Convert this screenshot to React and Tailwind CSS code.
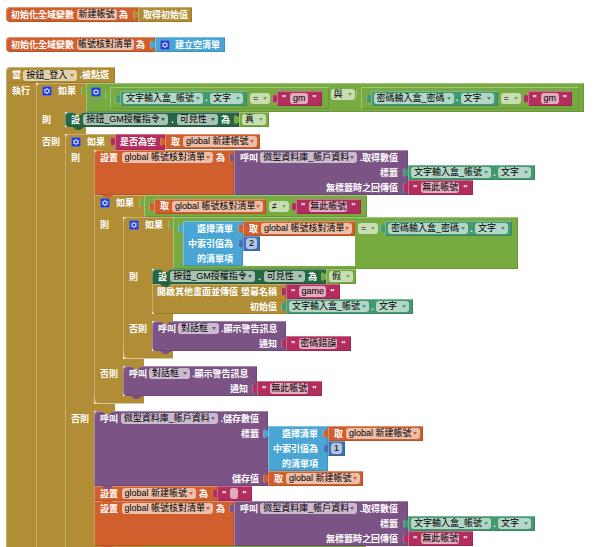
import React from "react";
import clsx from "clsx";

const MUSTARD = "bg-[#b18e35] text-[#b18e35]";
const GREEN = "bg-[#77ab41] text-[#77ab41]";
const CRIMSON = "bg-[#b32d5e] text-[#b32d5e]";
const ORANGE = "bg-[#d05f2d] text-[#d05f2d]";
const BLUE = "bg-[#49a6d4] text-[#49a6d4]";
const NAVY = "bg-[#3f71b5] text-[#3f71b5]";
const PURPLE = "bg-[#7c5385] text-[#7c5385]";
const TEAL = "bg-[#439970] text-[#439970]";
const FOREST = "bg-[#266643] text-[#266643]";

const BEVEL =
  "shadow-[inset_1px_1px_0_rgba(255,255,255,0.3),inset_-1px_-1px_0_rgba(0,0,0,0.12)]";

/* ---------- small parts ---------- */

function Label({ children }) {
  return <span className="shrink-0 whitespace-nowrap font-bold text-white">{children}</span>;
}

function Dropdown({ value, width }) {
  return (
    <span className={clsx("relative flex h-[11px] shrink-0", width)}>
      <select
        aria-label={value}
        className="h-[11px] w-full appearance-none rounded-[3px] bg-white/60 pl-[3px] text-[9px] leading-[11px] text-black outline-none"
      >
        <option>{value}</option>
      </select>
      <svg
        viewBox="0 0 4 3"
        className="pointer-events-none absolute right-[3px] top-[4px] h-[3px] w-[4px]"
        aria-hidden="true"
      >
        <path d="M0 0H4L2 3Z" fill="currentColor" />
      </svg>
    </span>
  );
}

function TextField({ value, width, name }) {
  return (
    <input
      type="text"
      aria-label={name}
      defaultValue={value}
      className={clsx(
        "h-[11px] shrink-0 rounded-[3px] bg-white/60 p-0 text-center text-[9px] leading-[11px] text-black outline-none",
        width
      )}
    />
  );
}

function Gear() {
  return (
    <button type="button" aria-label="設定" className="h-[10px] w-[10px] shrink-0">
      <svg viewBox="0 0 10 10" className="block h-full w-full">
        <rect x="0.4" y="0.4" width="9.2" height="9.2" rx="1.6" fill="#1f3fd8" stroke="#6a6fc8" strokeWidth="0.8" />
        <path
          d="M5 1.9V8.1M2.3 3.45L7.7 6.55M2.3 6.55L7.7 3.45"
          stroke="#fff"
          strokeOpacity="0.85"
          strokeWidth="1.1"
        />
        <circle cx="5" cy="5" r="1.9" fill="#1f3fd8" stroke="#e6e8fb" strokeWidth="0.9" />
      </svg>
    </button>
  );
}

function Plug() {
  return (
    <svg
      viewBox="0 0 5 10"
      className="absolute -left-[5px] top-[3px] z-10 h-[10px] w-[5px]"
      aria-hidden="true"
    >
      <path d="M5 1.6H3.6C2.8 1.6 2.6 0.6 1.8 0.6C0.8 0.6 0.4 1.6 0.4 3V6.2C0.4 7.8 0.8 8.6 1.8 8.6C2.8 8.6 3 7.8 3.8 7.8H5Z" fill="currentColor" />
      <path d="M1.8 0.6C0.8 0.6 0.4 1.6 0.4 3V6.2C0.4 7.8 0.8 8.6 1.8 8.6" fill="none" stroke="#fff" strokeOpacity="0.4" strokeWidth="0.7" />
    </svg>
  );
}

function Notch({ className }) {
  return (
    <svg
      viewBox="0 0 11 3"
      className={clsx("absolute left-[8px] z-10 h-[3px] w-[11px]", className)}
      aria-hidden="true"
    >
      <path d="M0 0H11L7.5 3H3.5Z" fill="currentColor" />
    </svg>
  );
}

function Row({ children, height = "h-[15px]", align = "justify-start" }) {
  return (
    <div className={clsx("flex items-start", height)}>
      <div className={clsx("flex h-[15px] grow items-center gap-[2px]", align)}>{children}</div>
    </div>
  );
}

/* ---------- value blocks ---------- */

function Value({ tone, className, children }) {
  return (
    <div className={clsx("relative flex h-[15px] shrink-0 items-center", tone, BEVEL, className)}>
      <Plug />
      {children}
    </div>
  );
}

function TextValue({ value, width }) {
  return (
    <Value tone={CRIMSON} className="gap-[4px] px-[5px]">
      <Label>"</Label>
      <TextField name="文字" value={value} width={width} />
      <Label>"</Label>
    </Value>
  );
}

function NumberValue({ value }) {
  return (
    <Value tone={NAVY} className="self-start px-[3px]">
      <TextField name="數字" value={value} width="w-[11px]" />
    </Value>
  );
}

function GetValue({ name, width }) {
  return (
    <Value tone={ORANGE} className="gap-[3px] self-start pl-[6px] pr-[3px]">
      <Label>取</Label>
      <Dropdown value={name} width={width} />
    </Value>
  );
}

function TextBoxValue({ name }) {
  return (
    <Value tone={TEAL} className="w-[127px] justify-between pl-[3px] pr-[4px]">
      <Dropdown value={name} width="w-[80px]" />
      <Label>.</Label>
      <Dropdown value="文字" width="w-[33px]" />
    </Value>
  );
}

function BoolValue({ value }) {
  return (
    <Value tone={GREEN} className="px-[3px]">
      <Dropdown value={value} width="w-[24px]" />
    </Value>
  );
}

function SelectItem({ list, index, className }) {
  return (
    <div className={clsx("flex items-start", className)}>
      <div className={clsx("relative w-[60px] shrink-0 pr-[10px]", BLUE, BEVEL)}>
        <Plug />
        <Row align="justify-end"><Label>選擇清單</Label></Row>
        <Row align="justify-end"><Label>中索引值為</Label></Row>
        <Row align="justify-end"><Label>的清單項</Label></Row>
      </div>
      <div className="flex flex-col items-start">
        {list}
        {index}
      </div>
    </div>
  );
}

function GmCheck({ box }) {
  return (
    <div className={clsx("relative flex h-[22px] items-center pl-[10px] pr-[7px]", GREEN, BEVEL)}>
      <Plug />
      <TextBoxValue name={box} />
      <div className="ml-[3px] mr-[7px]"><Dropdown value="=" width="w-[20px]" /></div>
      <TextValue value="gm" width="w-[18px]" />
    </div>
  );
}

function NotFoundCheck() {
  return (
    <div className={clsx("relative flex h-[22px] items-center pl-[10px] pr-[6px]", GREEN, BEVEL)}>
      <Plug />
      <div><GetValue name="global 帳號核對清單" width="w-[91px]" /></div>
      <div className="ml-[3px] mr-[7px]"><Dropdown value="≠" width="w-[20px]" /></div>
      <TextValue value="無此帳號" width="w-[38px]" />
    </div>
  );
}

function PasswordCheck() {
  return (
    <div className={clsx("relative flex h-[52px] items-start pl-[10px] pr-[6px] pt-[4px]", GREEN, BEVEL)}>
      <Plug />
      <SelectItem
        className="bg-white"
        list={<GetValue name="global 帳號核對清單" width="w-[91px]" />}
        index={<NumberValue value="2" />}
      />
      <div className="ml-[3px] mr-[7px] flex h-[15px] items-center">
        <Dropdown value="=" width="w-[20px]" />
      </div>
      <TextBoxValue name="密碼輸入盒_密碼" />
    </div>
  );
}

/* ---------- statement blocks ---------- */

function Statement({ tone, width, first, last, inputs, children }) {
  return (
    <div className="relative flex items-stretch">
      <div
        className={clsx(
          "relative shrink-0 pl-[6px] pr-[9px]",
          tone,
          BEVEL,
          width,
          first && "rounded-tl-[4px]",
          last && "rounded-bl-[4px]"
        )}
      >
        {first && <Notch className="top-0 text-[#b18e35]" />}
        {children}
        <Notch className="-bottom-[3px]" />
      </div>
      <div className="flex flex-col items-start">{inputs}</div>
    </div>
  );
}

function SetVisible({ value, ...rest }) {
  return (
    <Statement tone={FOREST} width="w-[174px]" inputs={<BoolValue value={value} />} {...rest}>
      <Row align="justify-between">
        <Label>設</Label>
        <Dropdown value="按鈕_GM授權指令" width="w-[85px]" />
        <Label>.</Label>
        <Dropdown value="可見性" width="w-[41px]" />
        <Label>為</Label>
      </Row>
    </Statement>
  );
}

function SetGlobal({ name, field, width, value, ...rest }) {
  return (
    <Statement tone={ORANGE} width={width} inputs={value} {...rest}>
      <Row align="justify-between">
        <Label>設置</Label>
        <Dropdown value={name} width={field} />
        <Label>為</Label>
      </Row>
    </Statement>
  );
}

function LookupValue() {
  return (
    <div className="flex items-start">
      <div className={clsx("relative w-[174px] shrink-0 pl-[6px] pr-[10px]", PURPLE, BEVEL)}>
        <Plug />
        <Row align="justify-between">
          <Label>呼叫</Label>
          <Dropdown value="微型資料庫_帳戶資料" width="w-[97px]" />
          <Label>.取得數值</Label>
        </Row>
        <Row align="justify-end"><Label>標籤</Label></Row>
        <Row align="justify-end"><Label>無標籤時之回傳值</Label></Row>
      </div>
      <div className="flex flex-col items-start pt-[15px]">
        <TextBoxValue name="文字輸入盒_帳號" />
        <TextValue value="無此帳號" width="w-[38px]" />
      </div>
    </div>
  );
}

function LoadAccounts(props) {
  return (
    <SetGlobal
      name="global 帳號核對清單"
      field="w-[91px]"
      width="w-[140px]"
      value={<LookupValue />}
      {...props}
    />
  );
}

function StoreAccount(props) {
  return (
    <Statement
      tone={PURPLE}
      width="w-[174px]"
      inputs={
        <div className="pt-[15px]">
          <SelectItem
            list={<GetValue name="global 新建帳號" width="w-[74px]" />}
            index={<NumberValue value="1" />}
          />
          <div className="flex"><GetValue name="global 新建帳號" width="w-[74px]" /></div>
        </div>
      }
      {...props}
    >
      <Row align="justify-between">
        <Label>呼叫</Label>
        <Dropdown value="微型資料庫_帳戶資料" width="w-[97px]" />
        <Label>.儲存數值</Label>
      </Row>
      <Row align="justify-end" height="h-[45px]"><Label>標籤</Label></Row>
      <Row align="justify-end"><Label>儲存值</Label></Row>
    </Statement>
  );
}

function Alert({ message }) {
  return (
    <Statement
      tone={PURPLE}
      width="w-[134px]"
      first
      last
      inputs={<div className="pt-[15px]"><TextValue value={message} width="w-[38px]" /></div>}
    >
      <Row align="justify-between">
        <Label>呼叫</Label>
        <Dropdown value="對話框" width="w-[41px]" />
        <Label>.顯示警告訊息</Label>
      </Row>
      <Row align="justify-end"><Label>通知</Label></Row>
    </Statement>
  );
}

function OpenScreen() {
  return (
    <div className="relative flex items-start">
      <div className={clsx("w-[134px] shrink-0 rounded-bl-[4px] pl-[5px] pr-[9px]", MUSTARD, BEVEL)}>
        <Row align="justify-between">
          <Label>開啟其他畫面並傳值</Label>
          <Label>螢幕名稱</Label>
        </Row>
        <Row align="justify-end"><Label>初始值</Label></Row>
      </div>
      <div className="flex flex-col items-start">
        <TextValue value="game" width="w-[27px]" />
        <TextBoxValue name="文字輸入盒_帳號" />
      </div>
    </div>
  );
}

/* ---------- if / else ---------- */

function Branch({ label, children }) {
  return (
    <div className="flex items-stretch">
      <div
        className={clsx(
          "flex w-[29px] shrink-0 items-start pl-[6px] shadow-[inset_1px_0_0_rgba(255,255,255,0.3)]",
          MUSTARD
        )}
      >
        <div className="flex h-[15px] items-center"><Label>{label}</Label></div>
      </div>
      <div className="flex flex-col items-start">{children}</div>
    </div>
  );
}

function If({ test, then, otherwise, first }) {
  return (
    <div className="relative">
      <div className="flex items-stretch">
        <div
          className={clsx(
            "w-[50px] shrink-0 pl-[6px] shadow-[inset_1px_1px_0_rgba(255,255,255,0.3)]",
            MUSTARD,
            first && "rounded-tl-[4px]"
          )}
        >
          <div className="flex h-[16px] items-center gap-[6px]">
            <Gear />
            <Label>如果</Label>
          </div>
        </div>
        {test}
      </div>
      <Branch label="則">{then}</Branch>
      <div className={clsx("h-[7px] w-[50px] shadow-[inset_1px_0_0_rgba(255,255,255,0.3)]", MUSTARD)} />
      <Branch label="否則">{otherwise}</Branch>
      <div
        className={clsx(
          "relative h-[8px] w-[50px] rounded-bl-[4px] shadow-[inset_1px_-1px_0_rgba(255,255,255,0.5)]",
          MUSTARD
        )}
      >
        <Notch className="-bottom-[3px]" />
      </div>
    </div>
  );
}

/* A collapsed check: only its condition bar, without branches. */
function EmptyIf() {
  return (
    <div className="flex h-[22px]">
      <div className={clsx("w-[50px]", MUSTARD)} />
      <div className={clsx("w-[222px]", GREEN)} />
    </div>
  );
}

/* ---------- top-level blocks ---------- */

function GlobalInit({ name, field, width, children }) {
  return (
    <div className="flex">
      <div
        className={clsx(
          "flex h-[15px] shrink-0 items-center justify-between rounded-l-[4px] pl-[5px] pr-[10px]",
          ORANGE,
          BEVEL,
          width
        )}
      >
        <Label>初始化全域變數</Label>
        <TextField name="全域變數名稱" value={name} width={field} />
        <Label>為</Label>
      </div>
      {children}
    </div>
  );
}

function LoginHandler() {
  return (
    <div>
      <div
        className={clsx(
          "flex h-[16px] w-[109px] items-center justify-between rounded-tl-[4px] px-[6px]",
          MUSTARD,
          BEVEL
        )}
      >
        <Label>當</Label>
        <Dropdown value="按鈕_登入" width="w-[54px]" />
        <Label>.被點選</Label>
      </div>
      <div className="flex items-stretch">
        <div className={clsx("w-[30px] shrink-0 pl-[6px] shadow-[inset_1px_0_0_rgba(255,255,255,0.3)]", MUSTARD)}>
          <div className="flex h-[15px] items-center"><Label>執行</Label></div>
        </div>
        <If
          first
          test={
            <div className={clsx("relative flex h-[29px] items-start px-[5px] pt-[4px]", GREEN, BEVEL)}>
              <Plug />
              <Gear />
              <div className="ml-[9px]"><GmCheck box="文字輸入盒_帳號" /></div>
              <div className="ml-[2px] mr-[6px] mt-[2px]"><Dropdown value="與" width="w-[24px]" /></div>
              <GmCheck box="密碼輸入盒_密碼" />
            </div>
          }
          then={<SetVisible value="真" first last />}
          otherwise={
            <If
              first
              test={
                <>
                  <div className={clsx("relative flex h-[16px] w-[50px] items-center pl-[5px]", CRIMSON, BEVEL)}>
                    <Plug />
                    <Label>是否為空</Label>
                  </div>
                  <GetValue name="global 新建帳號" width="w-[74px]" />
                </>
              }
              then={
                <>
                  <LoadAccounts first />
                  <If
                    test={<NotFoundCheck />}
                    then={
                      <If
                        first
                        test={<PasswordCheck />}
                        then={
                          <>
                            <SetVisible value="假" first />
                            <OpenScreen />
                          </>
                        }
                        otherwise={<Alert message="密碼錯誤" />}
                      />
                    }
                    otherwise={<Alert message="無此帳號" />}
                  />
                </>
              }
              otherwise={
                <>
                  <StoreAccount first />
                  <SetGlobal
                    name="global 新建帳號"
                    field="w-[74px]"
                    width="w-[123px]"
                    value={<TextValue value="" width="w-[8px]" />}
                  />
                  <LoadAccounts />
                  <EmptyIf />
                </>
              }
            />
          }
        />
      </div>
    </div>
  );
}

export default function App() {
  return (
    <main className="flex h-screen flex-col items-start gap-[15px] overflow-hidden bg-white pl-[6px] pt-[7px] font-['Liberation_Sans','Noto_Sans_CJK_TC',sans-serif] text-[9px] leading-[10px]">
      <GlobalInit name="新建帳號" field="w-[40px]" width="w-[132px]">
        <Value tone={MUSTARD} className="w-[54px] pl-[5px]">
          <Label>取得初始值</Label>
        </Value>
      </GlobalInit>
      <GlobalInit name="帳號核對清單" field="w-[57px]" width="w-[149px]">
        <Value tone={BLUE} className="w-[70px] justify-between px-[5px]">
          <Gear />
          <Label>建立空清單</Label>
        </Value>
      </GlobalInit>
      <LoginHandler />
    </main>
  );
}
